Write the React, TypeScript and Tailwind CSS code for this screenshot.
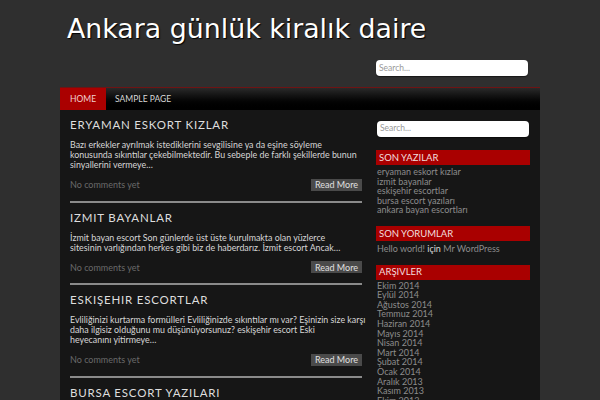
const POSTS = [
  {
    title: "ERYAMAN ESKORT KIZLAR",
    lines: [
      "Bazı erkekler ayrılmak istediklerini sevgilisine ya da eşine söyleme",
      "konusunda sıkıntılar çekebilmektedir. Bu sebeple de farklı şekillerde bunun",
      "sinyallerini vermeye…",
    ],
  },
  {
    title: "IZMIT BAYANLAR",
    lines: [
      "İzmit bayan escort Son günlerde üst üste kurulmakta olan yüzlerce",
      "sitesinin varlığından herkes gibi biz de haberdarız. İzmit escort Ancak…",
    ],
  },
  {
    title: "ESKIŞEHIR ESCORTLAR",
    lines: [
      "Evliliğinizi kurtarma formülleri Evliliğinizde sıkıntılar mı var? Eşinizin size karşı",
      "daha ilgisiz olduğunu mu düşünüyorsunuz? eskişehir escort Eski",
      "heyecanını yitirmeye…",
    ],
  },
  { title: "BURSA ESCORT YAZILARI", lines: [] },
]

const RECENT = [
  "eryaman eskort kızlar",
  "izmit bayanlar",
  "eskişehir escortlar",
  "bursa escort yazıları",
  "ankara bayan escortları",
]

const ARCHIVES = [
  "Ekim 2014",
  "Eylül 2014",
  "Ağustos 2014",
  "Temmuz 2014",
  "Haziran 2014",
  "Mayıs 2014",
  "Nisan 2014",
  "Mart 2014",
  "Şubat 2014",
  "Ocak 2014",
  "Aralık 2013",
  "Kasım 2013",
  "Ekim 2013",
]

function SearchBox() {
  return (
    <div className="flex h-[16px] w-[152px] items-center rounded-[4px] bg-white px-[3px] text-[8.5px] text-[#999] shadow-[0_1px_1px_rgba(0,0,0,0.5)]">
      Search...
    </div>
  )
}

function WidgetTitle({ children }: { children: React.ReactNode }) {
  return (
    <div className="flex h-[15px] items-center bg-[#a90000] px-[3px] text-[9.5px] text-[#f2dede]">
      {children}
    </div>
  )
}

function Post({ title, lines }: { title: string; lines: string[] }) {
  return (
    <article className="pt-[7px]">
      <h2 className="text-[11.5px] leading-[16px] tracking-[0.07em] text-[#dedede]">{title}</h2>
      {lines.length > 0 && (
        <>
          <p className="mt-[7px] whitespace-nowrap text-[8.85px] leading-[10px] text-[#d6d6d6]">
            {lines.map((line) => (
              <span key={line} className="block">
                {line}
              </span>
            ))}
          </p>
          <div className="mt-[8px] flex items-center justify-between">
            <span className="text-[9px] text-[#6a6a6a]">No comments yet</span>
            <span className="flex h-[12px] items-center bg-[#4a4a4a] px-[4px] text-[9px] text-[#e0e0e0]">
              Read More
            </span>
          </div>
          <div className="mt-[9px] h-[2px] bg-[#8a8a8a]" />
        </>
      )}
    </article>
  )
}

export default function App() {
  return (
    <div
      className="h-[400px] w-[600px] overflow-hidden bg-[#2f2f2f]"
      style={{ fontFamily: 'Lato, "Open Sans", sans-serif' }}
    >
      <div className="ml-[60px] w-[480px]">
        <h1
          className="pl-[7px] pt-[12px] text-[26.8px] leading-[34px] text-white [text-shadow:1px_1px_1px_#000]"
          style={{ fontFamily: '"DejaVu Sans", sans-serif' }}
        >
          Ankara günlük kiralık daire
        </h1>
        <div className="mt-[14px] flex justify-end pr-[12px]">
          <SearchBox />
        </div>
        <nav className="mt-[11px] flex h-[23px] border-t border-[#6e1414] bg-gradient-to-b from-[#2a2a2a] to-[#000] text-[8.5px]">
          <span className="flex items-center bg-[#aa0000] px-[10px] text-[#f0d0d0]">HOME</span>
          <span className="flex items-center px-[9px] text-[#d8d8d8]">SAMPLE PAGE</span>
        </nav>
        <div className="flex h-[300px] bg-[#161616] pl-[10px] pr-[10px]">
          <main className="w-[292px]">
            {POSTS.map((post) => (
              <Post key={post.title} title={post.title} lines={post.lines} />
            ))}
          </main>
          <aside className="ml-[14px] w-[154px] pt-[11px] text-[9px] leading-[9.6px] text-[#8c8c8c]">
            <div className="pl-[1px]">
              <SearchBox />
            </div>
            <div className="mt-[13px]">
              <WidgetTitle>SON YAZILAR</WidgetTitle>
              <ul className="mt-[2px] px-[1px]">
                {RECENT.map((r) => (
                  <li key={r}>{r}</li>
                ))}
              </ul>
            </div>
            <div className="mt-[11px]">
              <WidgetTitle>SON YORUMLAR</WidgetTitle>
              <p className="mt-[3px] px-[1px]">
                Hello world! <span className="text-[#d8d8d8]">için</span> Mr WordPress
              </p>
            </div>
            <div className="mt-[11px]">
              <WidgetTitle>ARŞIVLER</WidgetTitle>
              <ul className="mt-[1px] px-[1px]">
                {ARCHIVES.map((a) => (
                  <li key={a}>{a}</li>
                ))}
              </ul>
            </div>
          </aside>
        </div>
      </div>
    </div>
  )
}
